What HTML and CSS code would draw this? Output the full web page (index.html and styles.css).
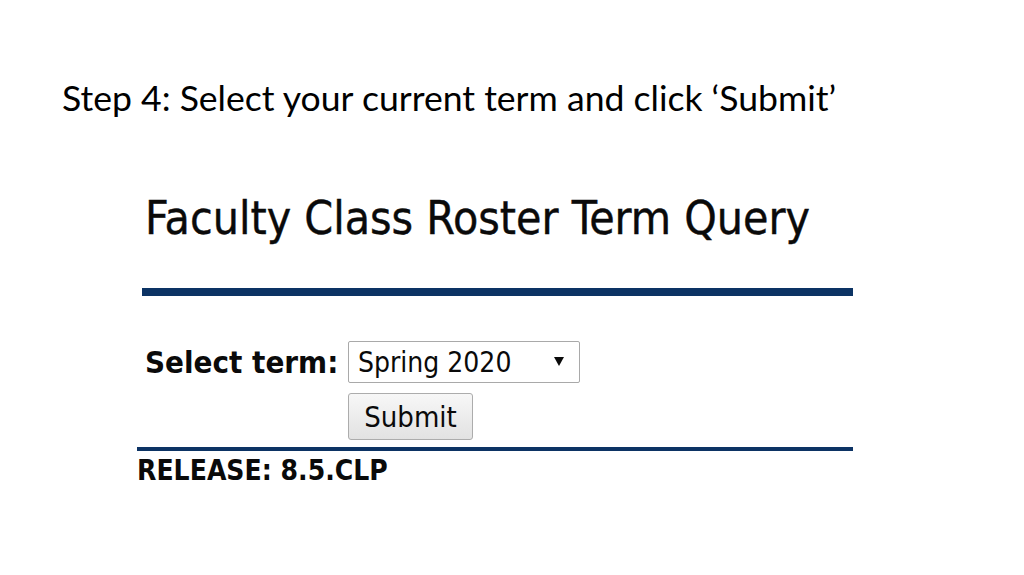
FILE: index.html
```html
<!DOCTYPE html>
<html lang="en">
<head>
  <meta charset="UTF-8">
  <title>Step 4 - Faculty Class Roster</title>
  <link rel="stylesheet" href="styles.css">
</head>
<body>
  <h1 class="step-title">Step 4: Select your current term and click ‘Submit’</h1>

  <!-- Screenshot of the roster term query form -->
  <div class="roster">
    <h2 class="roster-heading">Faculty Class Roster Term Query</h2>
    <div class="rule-thick"></div>

    <form class="term-form">
      <div class="term-row">
        <label class="term-label" for="term">Select term:</label>
        <span class="select-wrap">
          <select id="term" class="term-select">
            <option>Spring 2020</option>
          </select>
        </span>
      </div>
      <div class="submit-row">
        <button type="button" class="submit-btn">Submit</button>
      </div>
    </form>

    <div class="rule-thin"></div>
    <div class="release">RELEASE: 8.5.CLP</div>
  </div>
</body>
</html>
```

FILE: styles.css
```css
body {
  margin: 0;
  background: #fff;
  color: #000;
}

/* Slide title */
.step-title {
  margin: 0;
  padding: 76px 0 0 62px;
  font-family: Lato, "Liberation Sans", sans-serif;
  font-size: 35.6px;
  font-weight: normal;
  line-height: 44px;
}

/* Embedded form screenshot */
.roster {
  width: 716px;
  margin: 72px 0 0 137px;
  font-family: "DejaVu Sans Condensed", "DejaVu Sans", sans-serif;
  font-stretch: condensed;
  color: #0a0a0a;
}

.roster-heading {
  margin: 0 0 0 8px;
  font-size: 46px;
  font-weight: normal;
  line-height: 52px;
  -webkit-text-stroke: 0.4px #0a0a0a;
}

.rule-thick {
  height: 8px;
  margin: 44px 0 0 5px;
  background: #0c3364;
}

.term-form {
  margin: 45px 0 0 8px;
}

.term-row {
  display: flex;
  align-items: center;
}

.term-label {
  flex: 0 0 203px;
  font-size: 31px;
  font-weight: bold;
}

.select-wrap {
  position: relative;
  display: inline-block;
}

.term-select {
  appearance: none;
  -webkit-appearance: none;
  width: 232px;
  height: 42px;
  padding: 0 0 0 9px;
  border: 1px solid #a9a9a9;
  border-radius: 2px;
  background: #fff;
  font-family: inherit;
  font-stretch: condensed;
  font-size: 28px;
  color: #0a0a0a;
}

/* dropdown arrow */
.select-wrap::after {
  content: "";
  position: absolute;
  right: 16px;
  top: 16px;
  border-left: 5px solid transparent;
  border-right: 5px solid transparent;
  border-top: 9px solid #0a0a0a;
  pointer-events: none;
}

.submit-row {
  padding: 10px 0 0 203px;
}

.submit-btn {
  width: 125px;
  height: 47px;
  padding: 0;
  border: 1px solid #acacac;
  border-radius: 3px;
  background: linear-gradient(#f7f7f7, #e2e2e2);
  font-family: inherit;
  font-stretch: condensed;
  font-size: 29px;
  color: #0a0a0a;
}

.rule-thin {
  height: 4px;
  margin-top: 7px;
  background: #0c3364;
}

.release {
  margin-top: 4px;
  font-size: 28px;
  font-weight: bold;
  line-height: 32px;
}
```
